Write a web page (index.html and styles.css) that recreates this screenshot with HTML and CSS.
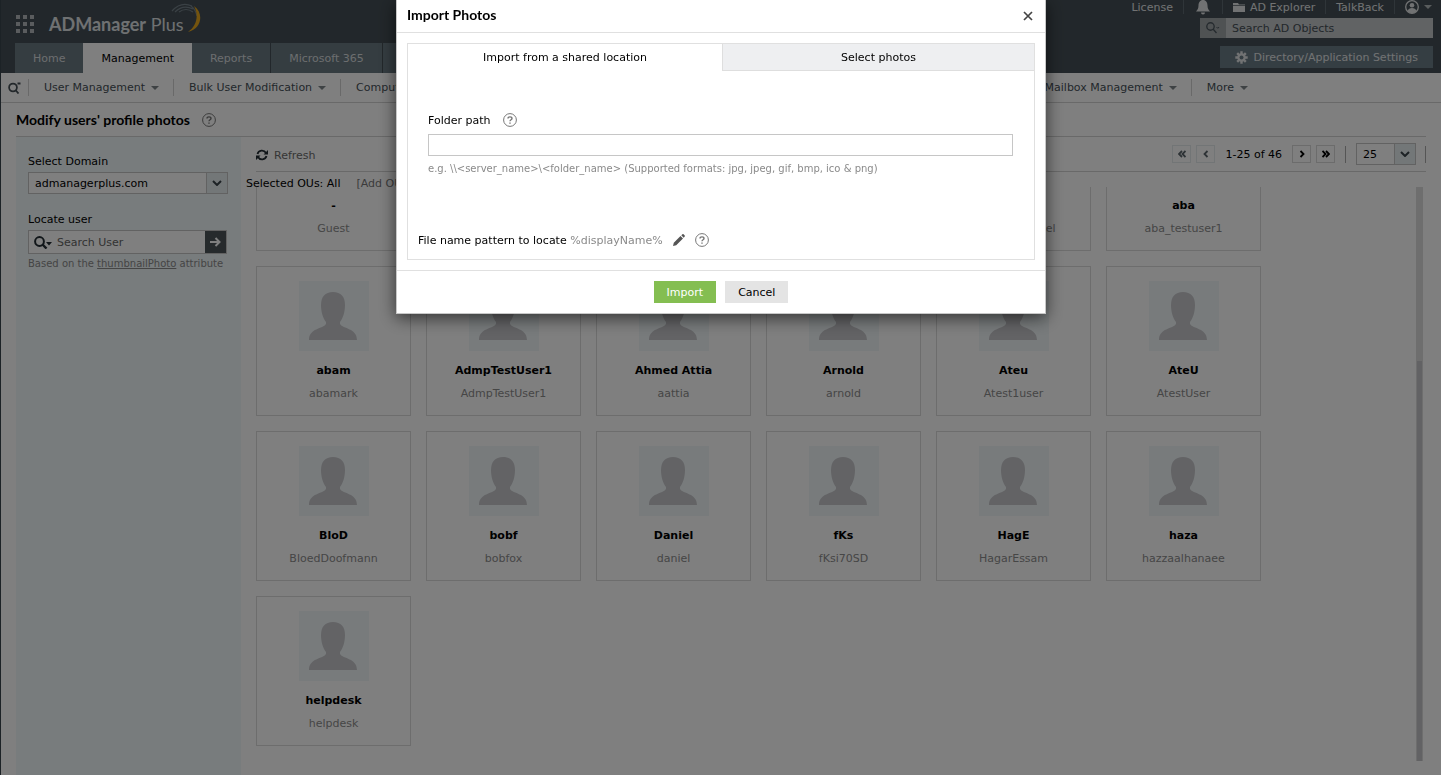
FILE: index.html
```html
<!DOCTYPE html>
<html lang="en">
<head>
<meta charset="utf-8">
<title>ADManager Plus - Modify users' profile photos</title>
<link rel="stylesheet" href="styles.css">
</head>
<body>
<svg class="defs" aria-hidden="true">
  <symbol id="person" viewBox="0 0 70 70"><path fill="#c7c7cb" d="M34 11c8 0 12 5 12 13 0 7-2 13-5 17v2c3 5 17 4 17 16H10c0-12 14-11 17-16v-2c-3-4-5-10-5-17 0-8 4-13 12-13z"/></symbol>
  <symbol id="help" viewBox="0 0 14 14"><circle cx="7" cy="7" r="6.4" fill="none" stroke="currentColor"/><path d="M5 5.5C5 3.3 9 3.3 9 5.5 9 6.8 7 6.7 7 8.3M7 9.4v1.3" fill="none" stroke="currentColor" stroke-width="1.4"/></symbol>
  <symbol id="chev" viewBox="0 0 10 6"><path d="M1 1l4 4 4-4" fill="none" stroke="currentColor" stroke-width="2"/></symbol>
</svg>

<div class="page">
  <header class="header">
    <div class="header-left">
      <div class="brand">
        <svg class="apps" viewBox="0 0 18 18" fill="#b4b9bc"><path d="M0 0h4v4H0zM7 0h4v4H7zM14 0h4v4h-4zM0 7h4v4H0zM7 7h4v4H7zM14 7h4v4h-4zM0 14h4v4H0zM7 14h4v4H7zM14 14h4v4h-4z"/></svg>
        <span class="brand-name"><b>ADManager</b> Plus</span>
        <svg class="swoosh" viewBox="0 0 32 32"><path d="M2 8Q11-2 22 3M5 9Q13 1 23 6M9 9Q16 4 23 9M21 3q5 4 6 10" fill="none" stroke="#75828b" stroke-width="1.2"/><path d="M24 3c10 7 8 23-6 26 9-6 11-17 6-26z" fill="#e8a81c"/></svg>
      </div>
      <nav class="tabs">
        <a class="tab" href="#">Home</a>
        <a class="tab tab-active" href="#">Management</a>
        <a class="tab" href="#">Reports</a>
        <a class="tab" href="#">Microsoft 365</a>
        <a class="tab" href="#">Delegation</a>
      </nav>
    </div>
    <div class="header-right">
      <nav class="top-links">
        <a href="#">License</a>
        <a href="#" aria-label="Notifications"><svg width="14" height="15" viewBox="0 0 14 15" fill="currentColor"><path d="M7 0c3 0 4.500 2.500 4.500 5.500 0 3 1 4.500 2.500 6H0c1.500-1.500 2.500-3 2.500-6C2.500 2.500 4 0 7 0zM5 12.500h4a2 2 0 0 1-4 0z"/></svg></a>
        <a href="#"><svg width="12" height="9" viewBox="0 0 12 9" fill="currentColor"><path d="M0 0h5l1 1.500h6V9H0z"/><path d="M0 2.500h12" stroke="#465057" stroke-width=".7"/></svg>AD Explorer</a>
        <a href="#">TalkBack</a>
        <a class="account" href="#" aria-label="Account"><svg width="14" height="14" viewBox="0 0 14 14"><circle cx="7" cy="7" r="6.300" fill="none" stroke="currentColor" stroke-width="1.300"/><circle cx="7" cy="5.300" r="2.300" fill="currentColor"/><path d="M2.500 11c1-4 8-4 9 0-2 3-7 3-9 0z" fill="currentColor"/></svg><i class="caret"></i></a>
      </nav>
      <div class="ad-search">
        <button class="ad-search-btn" aria-label="Search options"><svg width="14" height="12" viewBox="0 0 14 12" fill="none" stroke="#4b565d" stroke-width="1.400"><circle cx="4.500" cy="4.500" r="3.700"/><path d="M7 7l3.500 4"/><path d="M10.500 5l1.300 1.300L13.100 5" stroke-width="1"/></svg></button>
        <input type="text" placeholder="Search AD Objects" aria-label="Search AD Objects">
      </div>
      <button class="settings"><svg width="13" height="13" viewBox="0 0 13 13"><g stroke="currentColor" stroke-width="2.400"><path d="M6.500 .3v12.400M.3 6.500h12.400M2.200 2.200l8.600 8.600M10.800 2.200l-8.600 8.600"/></g><circle cx="6.500" cy="6.500" r="4.200" fill="currentColor"/><circle cx="6.500" cy="6.500" r="2" fill="#6b7c86"/></svg>Directory/Application Settings</button>
    </div>
  </header>

  <nav class="subnav">
    <button class="subnav-search" aria-label="Search"><svg width="13" height="12" viewBox="0 0 13 12" fill="none" stroke="#465057" stroke-width="1.800"><circle cx="5" cy="5.500" r="3.900"/><path d="M7.500 8l3 3.500M9.500 1.500h3"/></svg></button>
    <a href="#">User Management<i class="caret"></i></a>
    <a href="#">Bulk User Modification<i class="caret"></i></a>
    <a href="#">Computer Management<i class="caret"></i></a>
    <a class="subnav-end" href="#">Mailbox Management<i class="caret"></i></a>
    <a class="subnav-more" href="#">More<i class="caret"></i></a>
  </nav>

  <div class="title-row">
    <h1>Modify users' profile photos</h1>
    <svg class="help"><use href="#help"/></svg>
  </div>

  <div class="body">
    <aside class="side">
      <label for="domain">Select Domain</label>
      <div class="picker picker-domain">
        <select id="domain"><option>admanagerplus.com</option></select>
        <span class="picker-arrow"><svg width="10" height="6"><use href="#chev"/></svg></span>
      </div>
      <label for="locate">Locate user</label>
      <div class="locate">
        <svg width="18" height="13" viewBox="0 0 18 13"><circle cx="5.500" cy="5.500" r="4.400" fill="none" stroke="#222c33" stroke-width="2"/><path d="M8.500 8.500l4 4" stroke="#222c33" stroke-width="2.400"/><path d="M12 6h6l-3 3.500z" fill="#222c33"/></svg>
        <input id="locate" type="text" placeholder="Search User">
        <button aria-label="Go"><svg width="11" height="10" viewBox="0 0 11 10" fill="none" stroke="#fff" stroke-width="2"><path d="M0 5h9M5.500 1l4 4-4 4"/></svg></button>
      </div>
      <p class="hint">Based on the <a href="#">thumbnailPhoto</a> attribute</p>
    </aside>

    <main class="main">
      <div class="toolbar">
        <button class="refresh"><svg width="12" height="12" viewBox="0 0 12 12" fill="none" stroke="#222c33" stroke-width="1.800"><path d="M1.500 5C2.500 1 8 .5 10 4M10.500 7C9.500 11 4 11.500 2 8"/><path d="M12 1v4.500H7.500zM0 11V6.500h4.500z" fill="#222c33" stroke="none"/></svg>Refresh</button>
        <div class="pager">
          <button class="pg pg-off" aria-label="First"><svg width="8" height="8" viewBox="0 0 8 8"><path d="M4 1L1 4l3 3M7.500 1l-3 3 3 3"/></svg></button>
          <button class="pg pg-off" aria-label="Previous"><svg width="8" height="8" viewBox="0 0 8 8"><path d="M5.500 1l-3 3 3 3"/></svg></button>
          <span class="range">1-25 of 46</span>
          <button class="pg" aria-label="Next"><svg width="8" height="8" viewBox="0 0 8 8"><path d="M2.500 1l3 3-3 3"/></svg></button>
          <button class="pg" aria-label="Last"><svg width="8" height="8" viewBox="0 0 8 8"><path d="M.5 1l3 3-3 3M4 1l3 3-3 3"/></svg></button>
          <div class="page-size">
            <div class="picker">
              <select aria-label="Rows per page"><option>25</option></select>
              <span class="picker-arrow"><svg width="10" height="6"><use href="#chev"/></svg></span>
            </div>
          </div>
        </div>
      </div>
      <div class="ous"><span>Selected OUs: All</span><a href="#">[Add OUs]</a></div>
      <div class="results">
        <div class="grid">
          <article class="card card-cut"><h2>-</h2><p>Guest</p></article>
          <article class="card card-cut"></article>
          <article class="card card-cut"></article>
          <article class="card card-cut"></article>
          <article class="card card-cut"><h2>Aaron</h2><p>aaron_samuuel</p></article>
          <article class="card card-cut"><h2>aba</h2><p>aba_testuser1</p></article>
          <article class="card"><svg><use href="#person"/></svg><h2>abam</h2><p>abamark</p></article>
          <article class="card"><svg><use href="#person"/></svg><h2>AdmpTestUser1</h2><p>AdmpTestUser1</p></article>
          <article class="card"><svg><use href="#person"/></svg><h2>Ahmed Attia</h2><p>aattia</p></article>
          <article class="card"><svg><use href="#person"/></svg><h2>Arnold</h2><p>arnold</p></article>
          <article class="card"><svg><use href="#person"/></svg><h2>Ateu</h2><p>Atest1user</p></article>
          <article class="card"><svg><use href="#person"/></svg><h2>AteU</h2><p>AtestUser</p></article>
          <article class="card"><svg><use href="#person"/></svg><h2>BloD</h2><p>BloedDoofmann</p></article>
          <article class="card"><svg><use href="#person"/></svg><h2>bobf</h2><p>bobfox</p></article>
          <article class="card"><svg><use href="#person"/></svg><h2>Daniel</h2><p>daniel</p></article>
          <article class="card"><svg><use href="#person"/></svg><h2>fKs</h2><p>fKsi70SD</p></article>
          <article class="card"><svg><use href="#person"/></svg><h2>HagE</h2><p>HagarEssam</p></article>
          <article class="card"><svg><use href="#person"/></svg><h2>haza</h2><p>hazzaalhanaee</p></article>
          <article class="card"><svg><use href="#person"/></svg><h2>helpdesk</h2><p>helpdesk</p></article>
        </div>
        <div class="track"><div class="thumb"></div></div>
      </div>
    </main>
  </div>
</div>

<div class="backdrop">
  <div class="modal" role="dialog" aria-labelledby="dlg-title">
    <div class="modal-head">
      <h2 id="dlg-title">Import Photos</h2>
      <button class="close" aria-label="Close"><svg width="10" height="10" viewBox="0 0 10 10"><path d="M1 1l8 8M9 1L1 9" stroke="#444" stroke-width="1.700"/></svg></button>
    </div>
    <div class="panel">
      <div class="panel-tabs">
        <button class="panel-tab">Import from a shared location</button>
        <button class="panel-tab panel-tab-off">Select photos</button>
      </div>
      <div class="field">
        <div class="field-label"><label for="folder">Folder path</label><svg class="help"><use href="#help"/></svg></div>
        <input id="folder" type="text">
        <p>e.g. \\&lt;server_name&gt;\&lt;folder_name&gt; (Supported formats: jpg, jpeg, gif, bmp, ico &amp; png)</p>
      </div>
      <div class="pattern">
        <span>File name pattern to locate <em>%displayName%</em></span>
        <button aria-label="Edit pattern"><svg width="12" height="12" viewBox="0 0 12 12" fill="#555"><path d="M0 12l.8-3.200L7.500 2l2.500 2.500-6.800 6.700zM8.300 1.300L9.400.3q.6-.5 1.200 0l1.100 1.100q.5.600 0 1.200l-1 1.100z"/></svg></button>
        <svg class="help"><use href="#help"/></svg>
      </div>
    </div>
    <div class="modal-foot">
      <button class="btn btn-go">Import</button>
      <button class="btn">Cancel</button>
    </div>
  </div>
</div>
</body>
</html>
```
FILE: styles.css
```css
* { box-sizing: border-box; }
body, button, input, select {
  font-family: "DejaVu Sans", Verdana, sans-serif;
  font-size: 11px;
}
body {
  margin: 0;
  padding-left: 1px;
  background: #1c2226;
  color: #000;
  height: 100vh;
  overflow: hidden;
}
button { border: 0; background: none; padding: 0; color: inherit; }
input { min-width: 0; outline: 0; }
a { color: inherit; text-decoration: none; }
h1, h2, p { margin: 0; }
svg { flex: none; }
.defs { position: absolute; width: 0; height: 0; }
.page { background: #fff; height: 100vh; display: flex; flex-direction: column; }
.caret {
  border: 4px solid transparent;
  border-top: 4px solid currentColor;
  border-bottom: 0;
  opacity: .7;
}
.help { width: 14px; height: 14px; color: #777; }

.header {
  background: #454f56;
  height: 73px;
  display: flex;
  justify-content: space-between;
  flex: none;
}
.header-left { padding-left: 14px; }
.brand { height: 43px; display: flex; align-items: center; padding-top: 4px; }
.apps { width: 18px; height: 18px; margin: 0 15px 0 1px; }
.brand-name { font-family: Lato, sans-serif; font-size: 18px; color: #dfe2e4; }
.swoosh { width: 32px; height: 32px; margin: -10px 0 0 -14px; }
.tabs { display: flex; gap: 1px; height: 30px; }
.tab {
  background: #6a7a83;
  color: #d8dcde;
  padding: 0 18px;
  display: flex;
  align-items: center;
}
.tab-active { background: #fff; color: #000; margin: 0 -1px; }

.header-right {
  display: flex;
  flex-direction: column;
  align-items: flex-end;
  padding-right: 8px;
}
.top-links { display: flex; height: 14px; color: #e2e5e7; margin-bottom: 4px; }
.top-links a {
  display: flex;
  align-items: center;
  gap: 5px;
  padding: 0 10px;
  border-left: 1px solid #5f6b73;
}
.top-links a:first-child { border-left: 0; }
.top-links a:nth-child(2) { padding: 0 12px; }
.top-links .account { padding-right: 1px; }
.ad-search { display: flex; width: 233px; height: 20px; background: #c3c6c8; }
.ad-search-btn { width: 26px; background: #9fa4a7; display: grid; place-items: center; }
.ad-search input { flex: 1; border: 0; background: none; padding: 0 6px; }
.ad-search input::placeholder { color: #454f56; opacity: 1; }
.settings {
  margin-top: 8px;
  height: 22px;
  padding: 0 15px;
  background: #6b7c86;
  color: #e2e5e7;
  display: flex;
  align-items: center;
  gap: 6px;
}

.subnav {
  height: 30px;
  flex: none;
  display: flex;
  align-items: center;
  border-bottom: 1px solid #d2d2d2;
  color: #465057;
}
.subnav-search { width: 27px; height: 17px; display: grid; place-items: center; }
.subnav a {
  border-left: 1px solid #d2d2d2;
  height: 17px;
  padding: 0 14px 0 15px;
  display: flex;
  align-items: center;
  gap: 6px;
  white-space: nowrap;
}
.subnav .subnav-end { margin-left: auto; }
.subnav .subnav-more { margin-right: 179px; }

.title-row { height: 33px; flex: none; display: flex; align-items: center; gap: 12px; padding-left: 15px; }
h1, .modal h2 { font: bold 14px Lato, sans-serif; padding-bottom: 1px; }

.body {
  flex: 1;
  min-height: 0;
  display: flex;
  margin: 0 15px;
  border-top: 1px solid #d2d2d2;
}
.side { width: 225px; flex: none; background: #f1f8fa; padding: 17px 12px; }
.side label { display: block; line-height: 16px; }
.picker { display: flex; position: relative; background: #fff; border: 1px solid #c4c4c4; height: 22px; width: 60px; }
.picker select {
  appearance: none;
  flex: 1;
  min-width: 0;
  border: 0;
  background: none;
  padding: 0 26px 0 6px;
  color: inherit;
}
.picker-arrow {
  position: absolute;
  inset: 0 0 0 auto;
  width: 21px;
  border-left: 1px solid #c4c4c4;
  background: #e6eef0;
  color: #3a444b;
  display: grid;
  place-items: center;
  pointer-events: none;
}
.picker-domain { width: 200px; margin: 2px 0 18px; }
.locate { display: flex; align-items: center; background: #fff; border: 1px solid #c4c4c4; height: 24px; width: 199px; margin: 2px 0 3px; padding-left: 5px; gap: 3px; }
.locate input { flex: 1; border: 0; padding: 0 2px; background: none; }
.locate input::placeholder { color: #666; opacity: 1; }
.locate button { width: 21px; height: 22px; background: #4c5558; display: grid; place-items: center; }
.hint { font-size: 10px; line-height: 14px; color: #8a8a8a; white-space: nowrap; }
.hint a { text-decoration: underline; }

.main { flex: 1; min-width: 0; display: flex; flex-direction: column; padding-left: 15px; }
.toolbar { height: 35px; flex: none; display: flex; align-items: center; justify-content: space-between; border-bottom: 1px solid #d2d2d2; }
.refresh { display: flex; align-items: center; gap: 6px; color: #6c6c6c; padding-top: 2px; }
.pager { display: flex; align-items: center; gap: 5px; }
.pg { width: 19px; height: 18px; border: 1px solid #d8d8d8; display: grid; place-items: center; color: #000; }
.pg svg { fill: none; stroke: currentColor; stroke-width: 1.8; }
.pg-off { border-color: #e4eaec; color: #5c666c; }
.range { margin: 0 5px; }
.page-size {
  display: flex;
  align-items: center;
  height: 17px;
  padding: 0 9px 0 10px;
  margin-left: 5px;
  border: solid #aaa;
  border-width: 0 1px;
}
.ous { height: 15px; flex: none; line-height: 24px; display: flex; gap: 16px; margin-left: -10px; position: relative; z-index: 1; }
.ous a { color: #777; }
.results { flex: 1; min-height: 0; display: flex; justify-content: space-between; padding: 0 3px 14px 0; overflow: hidden; }
.grid { flex: 1; display: grid; grid-template-columns: repeat(auto-fill, 155px); grid-auto-rows: max-content; gap: 15px; }
.card {
  height: 150px;
  border: 1px solid #dadada;
  text-align: center;
  padding-top: 14px;
  display: flex;
  flex-direction: column;
  align-items: center;
}
.card-cut { height: 64px; border-top: 0; padding-top: 11px; }
.card svg { width: 70px; height: 70px; background: #f0f7f9; margin-bottom: 12px; }
.card h2 { font-size: 11px; line-height: 16px; }
.card p { line-height: 16px; margin-top: 7px; color: #8c8c8c; }
.track { width: 7px; background: #dcdcdc; padding: 174px 1px 0; }
.thumb { height: 100%; background: #c4c5c9; }

.backdrop {
  position: fixed;
  inset: 0 0 0 1px;
  background: rgba(0, 0, 0, .5);
  z-index: 5;
  display: flex;
  justify-content: center;
  align-items: flex-start;
}
.modal { width: 650px; background: #fff; border: 1px solid #c8c8c8; border-top: 0; box-shadow: 0 4px 16px rgba(0, 0, 0, .6); }
.modal-head { height: 33px; border-bottom: 1px solid #e0e0e0; display: flex; justify-content: space-between; align-items: center; padding: 0 12px 2px 10px; }
.close { display: flex; padding-top: 2px; }
.panel { margin: 10px; border: 1px solid #e0e0e0; }
.panel-tabs { display: flex; }
.panel-tab { flex: 1; height: 27px; }
.panel-tab-off { flex: 0 0 312px; background: #eeeff1; border: solid #dedede; border-width: 0 0 1px 1px; }
.field { padding: 41px 21px 0 20px; }
.field-label { display: flex; align-items: center; gap: 12px; height: 16px; }
.field input { width: 100%; height: 22px; border: 1px solid #c6c6c6; margin: 6px 0; display: block; }
.field p { font-size: 10px; line-height: 14px; color: #8a8a8a; }
.pattern { display: flex; align-items: center; gap: 10px; height: 20px; margin: 54px 10px 9px; }
.pattern em { font-style: normal; color: #8a8a8a; }
.pattern button { display: flex; }
.modal-foot { border-top: 1px solid #e0e0e0; display: flex; justify-content: center; gap: 9px; padding: 10px; }
.btn { height: 22px; padding: 0 13px; background: #e4e4e4; }
.btn-go { background: #84be51; color: #fff; }
```
